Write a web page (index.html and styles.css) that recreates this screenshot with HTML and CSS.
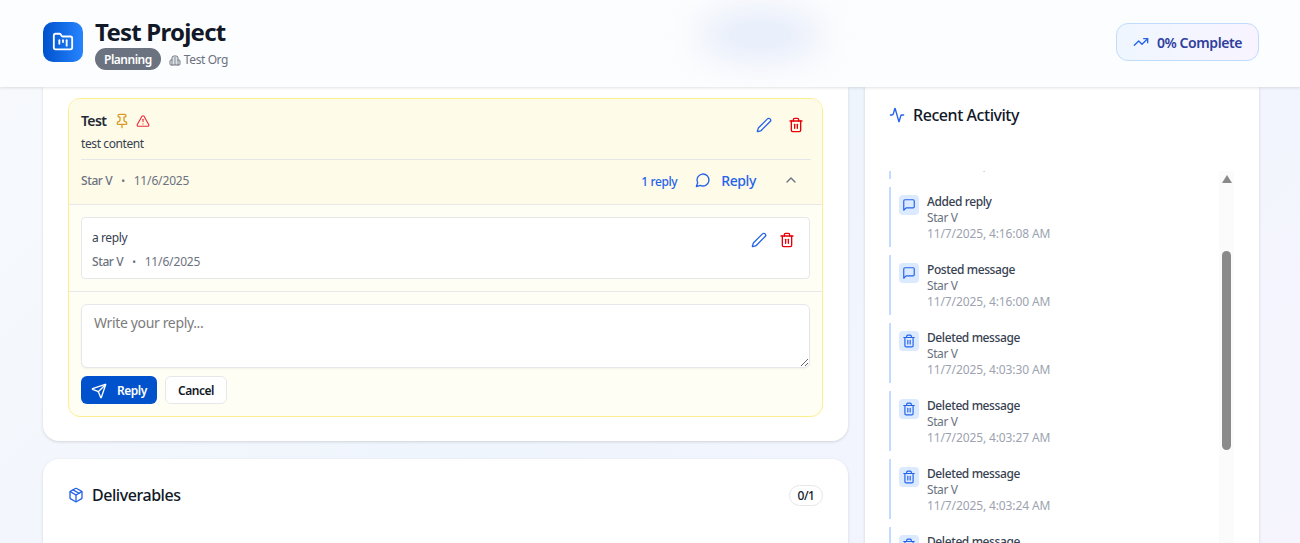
FILE: index.html
```html
<!DOCTYPE html>
<html lang="en">
<head>
<meta charset="utf-8">
<title>Test Project</title>
<link rel="stylesheet" href="styles.css">
</head>
<body>
<header class="topbar">
  <div class="blob"></div>
  <div class="brand">
    <div class="logo">
      <svg class="ico i22" viewBox="0 0 24 24"><path d="M4 20h16a2 2 0 0 0 2-2V8a2 2 0 0 0-2-2h-7.93a2 2 0 0 1-1.66-.9l-.82-1.2A2 2 0 0 0 7.93 3H4a2 2 0 0 0-2 2v13c0 1.1.9 2 2 2Z"/><path d="M8 10v4"/><path d="M12 10v2"/><path d="M16 10v6"/></svg>
    </div>
    <div class="brand-text">
      <h1 class="title">Test Project</h1>
      <div class="subline">
        <span class="badge">Planning</span>
        <svg class="ico i12 org-ico" viewBox="0 0 24 24"><path d="M6 22V8a4 4 0 0 1 4-4h4a4 4 0 0 1 4 4v14"/><path d="M6 12H4a2 2 0 0 0-2 2v6a2 2 0 0 0 2 2h16a2 2 0 0 0 2-2v-6a2 2 0 0 0-2-2h-2"/><path d="M10 8h4"/><path d="M10 12h4"/><path d="M10 16h4"/><path d="M10 20h4"/></svg>
        <span class="org">Test Org</span>
      </div>
    </div>
  </div>
  <div class="progress">
    <svg class="ico i16 blue" viewBox="0 0 24 24"><path d="M22 7 13.5 15.5 8.5 10.5 2 17"/><path d="M16 7h6v6"/></svg>
    <span>0% Complete</span>
  </div>
</header>

<main class="layout">
  <div class="col-left">
    <section class="card card-messages">
      <article class="message">
        <div class="msg-top">
          <div class="msg-head">
            <div class="msg-title-row">
              <span class="msg-title">Test</span>
              <svg class="ico i16 amber pin" viewBox="0 0 24 24"><path d="M12 17v5"/><path d="M9 10.76a2 2 0 0 1-1.11 1.79l-1.78.9A2 2 0 0 0 5 15.24V16a1 1 0 0 0 1 1h12a1 1 0 0 0 1-1v-.76a2 2 0 0 0-1.11-1.79l-1.78-.9A2 2 0 0 1 15 10.76V7a1 1 0 0 1 1-1 2 2 0 0 0 0-4H8a2 2 0 0 0 0 4 1 1 0 0 1 1 1z"/></svg>
              <svg class="ico i14 alert" viewBox="0 0 24 24"><path d="m21.73 18-8-14a2 2 0 0 0-3.48 0l-8 14A2 2 0 0 0 4 21h16a2 2 0 0 0 1.73-3"/><path d="M12 9v4"/><path d="M12 17h.01"/></svg>
            </div>
            <div class="actions">
              <svg class="ico i16 blue" viewBox="0 0 24 24"><path d="M21.174 6.812a1 1 0 0 0-3.986-3.987L3.842 16.174a2 2 0 0 0-.5.83l-1.321 4.352a.5.5 0 0 0 .623.622l4.353-1.32a2 2 0 0 0 .83-.497z"/></svg>
              <svg class="ico i16 red" viewBox="0 0 24 24"><path d="M3 6h18"/><path d="M19 6v14a2 2 0 0 1-2 2H7a2 2 0 0 1-2-2V6"/><path d="M8 6V4a2 2 0 0 1 2-2h4a2 2 0 0 1 2 2v2"/><path d="M10 11v6"/><path d="M14 11v6"/></svg>
            </div>
          </div>
          <p class="msg-text">test content</p>
          <div class="msg-meta">
            <div class="byline"><span class="author">Star V</span><span class="dot">•</span><span class="date">11/6/2025</span></div>
            <div class="reply-tools">
              <span class="reply-count">1 reply</span>
              <span class="reply-link">
                <svg class="ico i16" viewBox="0 0 24 24"><path d="M7.9 20A9 9 0 1 0 4 16.1L2 22Z"/></svg>
                Reply
              </span>
              <svg class="ico i16 chevron" viewBox="0 0 24 24"><path d="m18 15-6-6-6 6"/></svg>
            </div>
          </div>
        </div>
        <div class="replies">
          <div class="reply">
            <div class="reply-body">
              <p class="reply-text">a reply</p>
              <div class="byline"><span class="author">Star V</span><span class="dot">•</span><span class="date">11/6/2025</span></div>
            </div>
            <div class="actions actions-tight">
              <svg class="ico i16 blue" viewBox="0 0 24 24"><path d="M21.174 6.812a1 1 0 0 0-3.986-3.987L3.842 16.174a2 2 0 0 0-.5.83l-1.321 4.352a.5.5 0 0 0 .623.622l4.353-1.32a2 2 0 0 0 .83-.497z"/></svg>
              <svg class="ico i16 red" viewBox="0 0 24 24"><path d="M3 6h18"/><path d="M19 6v14a2 2 0 0 1-2 2H7a2 2 0 0 1-2-2V6"/><path d="M8 6V4a2 2 0 0 1 2-2h4a2 2 0 0 1 2 2v2"/><path d="M10 11v6"/><path d="M14 11v6"/></svg>
            </div>
          </div>
        </div>
        <div class="composer">
          <textarea class="input" placeholder="Write your reply..."></textarea>
          <div class="composer-btns">
            <button class="btn btn-primary">
              <svg class="ico i16" viewBox="0 0 24 24"><path d="M14.536 21.686a.5.5 0 0 0 .937-.024l6.5-19a.496.496 0 0 0-.635-.635l-19 6.5a.5.5 0 0 0-.024.937l7.93 3.18a2 2 0 0 1 1.112 1.11z"/><path d="m21.854 2.147-10.94 10.939"/></svg>
              Reply
            </button>
            <button class="btn btn-ghost">Cancel</button>
          </div>
        </div>
      </article>
    </section>
    <section class="card card-deliv">
      <div class="deliv-head">
        <h2 class="section-title">
          <svg class="ico i16 blue" viewBox="0 0 24 24"><path d="M11 21.73a2 2 0 0 0 2 0l7-4A2 2 0 0 0 21 16V8a2 2 0 0 0-1-1.73l-7-4a2 2 0 0 0-2 0l-7 4A2 2 0 0 0 3 8v8a2 2 0 0 0 1 1.73z"/><path d="M12 22V12"/><path d="m3.3 7 8.7 5 8.7-5"/><path d="m7.5 4.27 9 5.15"/></svg>
          Deliverables
        </h2>
        <span class="count">0/1</span>
      </div>
    </section>
  </div>

  <aside class="card card-activity">
    <h2 class="section-title activity-title">
      <svg class="ico i16 blue" viewBox="0 0 24 24"><path d="M22 12h-2.48a2 2 0 0 0-1.93 1.46l-2.35 8.36a.25.25 0 0 1-.48 0L9.24 2.18a.25.25 0 0 0-.48 0l-2.35 8.36A2 2 0 0 1 4.49 12H2"/></svg>
      Recent Activity
    </h2>
    <div class="feed-wrap">
      <div class="feed">
        <div class="feed-item">
          <div class="feed-ico"><svg class="ico i14" viewBox="0 0 24 24"><path d="M21 15a2 2 0 0 1-2 2H7l-4 4V5a2 2 0 0 1 2-2h14a2 2 0 0 1 2 2z"/></svg></div>
          <div class="feed-text"><div class="feed-title">Added reply</div><div class="feed-user">Star V</div><div class="feed-time">11/7/2025, 4:16:20 AM</div></div>
        </div>
        <div class="feed-item">
          <div class="feed-ico"><svg class="ico i14" viewBox="0 0 24 24"><path d="M21 15a2 2 0 0 1-2 2H7l-4 4V5a2 2 0 0 1 2-2h14a2 2 0 0 1 2 2z"/></svg></div>
          <div class="feed-text"><div class="feed-title">Added reply</div><div class="feed-user">Star V</div><div class="feed-time">11/7/2025, 4:16:08 AM</div></div>
        </div>
        <div class="feed-item">
          <div class="feed-ico"><svg class="ico i14" viewBox="0 0 24 24"><path d="M21 15a2 2 0 0 1-2 2H7l-4 4V5a2 2 0 0 1 2-2h14a2 2 0 0 1 2 2z"/></svg></div>
          <div class="feed-text"><div class="feed-title">Posted message</div><div class="feed-user">Star V</div><div class="feed-time">11/7/2025, 4:16:00 AM</div></div>
        </div>
        <div class="feed-item">
          <div class="feed-ico"><svg class="ico i14" viewBox="0 0 24 24"><path d="M3 6h18"/><path d="M19 6v14a2 2 0 0 1-2 2H7a2 2 0 0 1-2-2V6"/><path d="M8 6V4a2 2 0 0 1 2-2h4a2 2 0 0 1 2 2v2"/><path d="M10 11v6"/><path d="M14 11v6"/></svg></div>
          <div class="feed-text"><div class="feed-title">Deleted message</div><div class="feed-user">Star V</div><div class="feed-time">11/7/2025, 4:03:30 AM</div></div>
        </div>
        <div class="feed-item">
          <div class="feed-ico"><svg class="ico i14" viewBox="0 0 24 24"><path d="M3 6h18"/><path d="M19 6v14a2 2 0 0 1-2 2H7a2 2 0 0 1-2-2V6"/><path d="M8 6V4a2 2 0 0 1 2-2h4a2 2 0 0 1 2 2v2"/><path d="M10 11v6"/><path d="M14 11v6"/></svg></div>
          <div class="feed-text"><div class="feed-title">Deleted message</div><div class="feed-user">Star V</div><div class="feed-time">11/7/2025, 4:03:27 AM</div></div>
        </div>
        <div class="feed-item">
          <div class="feed-ico"><svg class="ico i14" viewBox="0 0 24 24"><path d="M3 6h18"/><path d="M19 6v14a2 2 0 0 1-2 2H7a2 2 0 0 1-2-2V6"/><path d="M8 6V4a2 2 0 0 1 2-2h4a2 2 0 0 1 2 2v2"/><path d="M10 11v6"/><path d="M14 11v6"/></svg></div>
          <div class="feed-text"><div class="feed-title">Deleted message</div><div class="feed-user">Star V</div><div class="feed-time">11/7/2025, 4:03:24 AM</div></div>
        </div>
        <div class="feed-item">
          <div class="feed-ico"><svg class="ico i14" viewBox="0 0 24 24"><path d="M3 6h18"/><path d="M19 6v14a2 2 0 0 1-2 2H7a2 2 0 0 1-2-2V6"/><path d="M8 6V4a2 2 0 0 1 2-2h4a2 2 0 0 1 2 2v2"/><path d="M10 11v6"/><path d="M14 11v6"/></svg></div>
          <div class="feed-text"><div class="feed-title">Deleted message</div><div class="feed-user">Star V</div><div class="feed-time">11/7/2025, 4:03:20 AM</div></div>
        </div>
      </div>
      <div class="scroll-track">
        <div class="scroll-arrow"></div>
        <div class="scroll-thumb"></div>
      </div>
    </div>
  </aside>
</main>
</body>
</html>
```

FILE: styles.css
```css
* { box-sizing: border-box; }
html, body { margin: 0; height: 100%; overflow: hidden; }
body {
  font-family: "Noto Sans", "Open Sans", "Liberation Sans", sans-serif;
  background: linear-gradient(135deg, #f8fafd 0%, #eff5fd 50%, #f6f5fe 100%);
  color: #111827;
  display: flex;
  flex-direction: column;
  letter-spacing: -0.025em;
}
.ico { fill: none; stroke: currentColor; stroke-width: 2; stroke-linecap: round; stroke-linejoin: round; flex: none; display: block; }
.i22 { width: 22px; height: 22px; }
.i16 { width: 16px; height: 16px; }
.i14 { width: 14px; height: 14px; }
.i12 { width: 12px; height: 12px; }
.blue { color: #2563eb; }
.red { color: #e7000b; }
.amber { color: #d99a2a; }
.alert { color: #ef2b3a; }

.topbar {
  position: relative;
  z-index: 2;
  flex: none;
  height: 87px;
  padding: 0 41px 3px 43px;
  display: flex;
  align-items: center;
  justify-content: space-between;
  background: #fcfdfe;
  box-shadow: 0 1px 3px rgba(0,0,0,.12);
  overflow: hidden;
}
.blob {
  position: absolute;
  left: 698px;
  top: 10px;
  width: 124px;
  height: 50px;
  border-radius: 50%;
  background: #e4ebfa;
  filter: blur(18px);
}
.brand { position: relative; display: flex; gap: 12px; align-items: center; }
.logo {
  width: 40px;
  height: 40px;
  border-radius: 10px;
  background: linear-gradient(90deg, #0052cc, #2684ff);
  color: #fff;
  display: flex;
  align-items: center;
  justify-content: center;
}
.brand-text { display: flex; flex-direction: column; margin-top: 2px; }
.title { margin: 0; font-size: 24px; line-height: 32px; font-weight: 700; color: #111827; letter-spacing: -0.032em; }
.subline { display: flex; align-items: center; font-size: 12px; color: #6b7280; }
.badge {
  height: 22px;
  line-height: 24px;
  padding: 0 9px;
  border-radius: 11px;
  background: #6b7280;
  color: #fff;
  font-weight: 600;
  margin-right: 8px;
  letter-spacing: -0.04em;
}
.org-ico { margin-right: 3px; margin-top: 1px; }
.org { line-height: 24px; height: 22px; }
.progress {
  position: relative;
  width: 143px;
  height: 38px;
  border: 1px solid #bfdbfe;
  border-radius: 12px;
  background: linear-gradient(90deg, #eff6ff, #f8f4ff);
  display: flex;
  align-items: center;
  justify-content: center;
  gap: 8px;
  font-size: 14px;
  font-weight: 600;
  color: #2f3f9e;
  letter-spacing: -0.03em;
}

.layout {
  flex: 1;
  min-height: 0;
  padding: 0 41px 0 43px;
  display: grid;
  grid-template-columns: 805px 394px;
  gap: 17px;
  overflow: hidden;
  align-items: start;
}
.col-left { display: flex; flex-direction: column; gap: 18px; }
.card {
  background: #fff;
  border-radius: 16px;
  box-shadow: 0 1px 3px rgba(0,0,0,.14);
}
.card-messages { padding: 11px 25px 24px; border-radius: 0 0 16px 16px; }

.message {
  border: 1px solid #fdee8f;
  border-radius: 12px;
  overflow: hidden;
  background: #fffef4;
}
.msg-top { background: #fefbe8; padding: 12px; border-bottom: 1px solid #e5e7eb; }
.msg-head { display: flex; justify-content: space-between; align-items: flex-start; height: 22px; padding-right: 6px; }
.msg-title-row { display: flex; align-items: center; gap: 6px; }
.msg-title { font-size: 14px; line-height: 20px; font-weight: 600; color: #1f2937; letter-spacing: -0.045em; }
.pin { margin-left: 2px; }
.actions { display: flex; gap: 16px; padding-top: 6px; }
.actions-tight { gap: 12px; }
.msg-text { margin: 1px 0 0; font-size: 12px; line-height: 20px; color: #374151; padding-bottom: 5px; }
.msg-meta {
  border-top: 1px solid #e5e7eb;
  margin-right: -1px;
  height: 33px;
  padding-top: 10px;
  display: flex;
  justify-content: space-between;
  align-items: center;
}
.byline { display: flex; align-items: center; font-size: 12px; line-height: 16px; color: #6b7280; }
.author { font-weight: 500; }
.dot { margin: 0 9px; font-size: 10px; }
.date { letter-spacing: -0.012em; }
.reply-tools { display: flex; align-items: center; font-size: 12px; color: #2563eb; }
.reply-count { font-weight: 500; }
.reply-link { display: flex; align-items: center; gap: 10px; font-size: 14px; font-weight: 500; margin: 0 0 2px 18px; }
.chevron { color: #6b7280; margin: 0 12px 2px 27px; }

.replies { padding: 12px; border-bottom: 1px solid #e5e7eb; }
.reply {
  height: 62px;
  background: #fff;
  border: 1px solid #e5e7eb;
  border-radius: 4px;
  padding: 11px 14px 0 10px;
  display: flex;
  justify-content: space-between;
}
.reply-text { margin: 0 0 7px; font-size: 12px; line-height: 18px; color: #374151; }
.reply .actions { padding-top: 3px; }

.composer { padding: 12px; }
.input {
  display: block;
  width: 729px;
  height: 64px;
  padding: 8px 12px;
  border: 1px solid #e5e7eb;
  border-radius: 6px;
  background: #fff;
  font: 14px/20px "Noto Sans", "Open Sans", sans-serif;
  letter-spacing: -0.025em;
  box-shadow: 0 1px 2px rgba(0,0,0,.05);
}
.input::placeholder { color: #7c7c7c; }
.composer-btns { display: flex; gap: 8px; margin-top: 8px; }
.btn {
  height: 28px;
  border-radius: 6px;
  font: 600 12px/16px "Noto Sans", "Open Sans", sans-serif;
  letter-spacing: -0.04em;
  display: flex;
  align-items: center;
}
.btn-primary { width: 76px; background: #0052cc; color: #fff; border: 0; padding: 1px 0 0 10px; gap: 10px; }
.btn-ghost { width: 62px; justify-content: center; background: #fff; color: #111827; border: 1px solid #e5e7eb; padding: 1px 0 0; }

.card-deliv { height: 200px; padding: 25px 25px 0; }
.deliv-head { display: flex; justify-content: space-between; align-items: center; height: 22px; }
.section-title { margin: 0; display: flex; align-items: center; gap: 8px; font-size: 16px; line-height: 24px; font-weight: 500; color: #111827; letter-spacing: -0.028em; }
.count {
  height: 21px;
  width: 34px;
  line-height: 19px;
  text-align: center;
  border: 1px solid #e5e7eb;
  border-radius: 11px;
  background: #fff;
  font-size: 12px;
  font-weight: 500;
  color: #111827;
}

.card-activity { height: 600px; padding: 16px 25px 0 24px; border-radius: 0; }
.activity-title { height: 24px; }
.feed-wrap { position: relative; margin-top: 44px; height: 372px; overflow: hidden; }
.feed { display: flex; flex-direction: column; gap: 8px; margin-top: -52px; }
.feed-item {
  height: 60px;
  flex: none;
  border-left: 2px solid #bfdbfe;
  padding: 7px 0 0 8px;
  display: flex;
  gap: 8px;
}
.feed-ico {
  width: 20px;
  height: 20px;
  margin-top: 1px;
  border-radius: 4px;
  background: #dbeafe;
  color: #2563eb;
  display: flex;
  align-items: center;
  justify-content: center;
}
.feed-title { font-size: 12px; line-height: 16px; font-weight: 500; color: #374151; }
.feed-user { font-size: 12px; line-height: 16px; color: #6b7280; }
.feed-time { font-size: 12px; line-height: 16px; color: #9ca3af; letter-spacing: -0.01em; }

.scroll-track { position: absolute; top: 0; right: 0; width: 15px; height: 100%; background: #fbfbfb; }
.scroll-arrow {
  position: absolute;
  left: 3px;
  top: 4px;
  width: 0;
  height: 0;
  border-left: 5px solid transparent;
  border-right: 5px solid transparent;
  border-bottom: 8px solid #8a8a8a;
}
.scroll-thumb {
  position: absolute;
  left: 3px;
  top: 80px;
  width: 9px;
  height: 199px;
  border-radius: 5px;
  background: #8a8a8a;
}
```
